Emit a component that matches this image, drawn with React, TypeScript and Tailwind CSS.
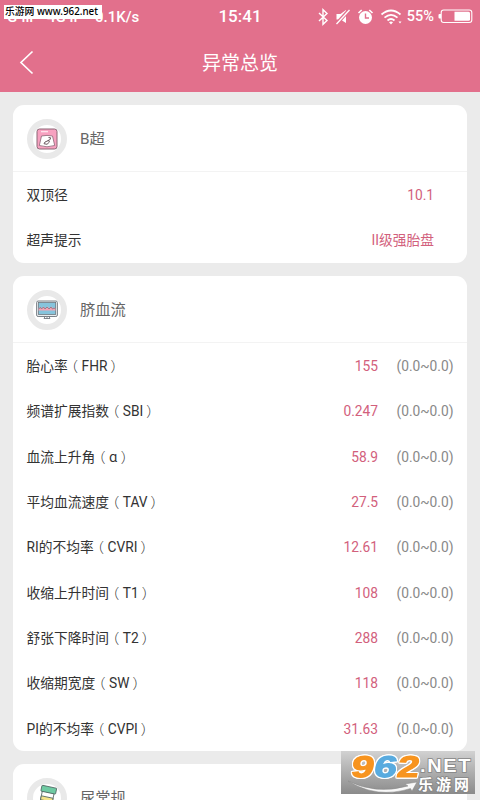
import type { ReactNode } from 'react'

type Row = { label: string; code?: string; value: string; range?: string }

const ULTRASOUND: Row[] = [
  { label: '双顶径', value: '10.1' },
  { label: '超声提示', value: 'II级强胎盘' },
]

const BLOOD_FLOW: Row[] = [
  { label: '胎心率', code: 'FHR', value: '155', range: '(0.0~0.0)' },
  { label: '频谱扩展指数', code: 'SBI', value: '0.247', range: '(0.0~0.0)' },
  { label: '血流上升角', code: 'ɑ', value: '58.9', range: '(0.0~0.0)' },
  { label: '平均血流速度', code: 'TAV', value: '27.5', range: '(0.0~0.0)' },
  { label: 'RI的不均率', code: 'CVRI', value: '12.61', range: '(0.0~0.0)' },
  { label: '收缩上升时间', code: 'T1', value: '108', range: '(0.0~0.0)' },
  { label: '舒张下降时间', code: 'T2', value: '288', range: '(0.0~0.0)' },
  { label: '收缩期宽度', code: 'SW', value: '118', range: '(0.0~0.0)' },
  { label: 'PI的不均率', code: 'CVPI', value: '31.63', range: '(0.0~0.0)' },
]

function ScanIcon() {
  return (
    <svg width="22" height="22" viewBox="0 0 22 22" fill="none">
      <rect x="1" y="1" width="20" height="20" rx="2.500" fill="#f7a1c0" stroke="#8a6675" />
      <path d="M5 3.600h7" stroke="#fde3ec" strokeWidth="1.400" />
      <path d="M5.500 8q5.500-1.200 11 0l2.200 9.500q-7.700 2.600-15.400 0z" fill="#fff" stroke="#8a6675" strokeWidth=".8" />
      <path d="M12.500 9.500l2.200.3-1 2.200-2 .5M12.500 12.500l1 1.500-2.500 2.300-3-.6 1-1.700z" stroke="#5c4850" strokeWidth=".9" />
    </svg>
  )
}

function MonitorIcon() {
  return (
    <svg width="22" height="20" viewBox="0 0 22 20" fill="none">
      <rect x=".6" y="1" width="20.800" height="15.500" rx="1.500" fill="#e9eef0" stroke="#7b8187" />
      <rect x="2.300" y="2.500" width="17.400" height="12" fill="#86c4dc" stroke="#656c73" strokeWidth=".7" />
      <path d="M2.500 8.500l2-1.500 1.500 1.500 1.500-2 2 2 2-2 2 2 2-2 1.500 2 1-1 1.500 1v2h-17z" fill="#f3a3b4" />
      <path d="M2.500 9l2-1.500 1 1.500 2-2 1.500 2 2-2 2 2 2-2 1.500 2 1.500-1 1.500 1" stroke="#6d5f6c" strokeWidth=".6" />
      <path d="M9 16.500l-1 2h6l-1-2M11 17v1.500" stroke="#656c73" strokeWidth=".8" />
    </svg>
  )
}

function BottleIcon() {
  return (
    <svg width="22" height="26" viewBox="0 0 22 26" fill="none">
      <g transform="rotate(12 11 13)" stroke="#4f6460" strokeWidth=".8">
        <path d="M5 7h12v17H5z" fill="#fff" />
        <path d="M5 12h12v4H5z" fill="#f4e389" />
        <rect x="3.500" y="1.500" width="15" height="6" rx=".7" fill="#6fcba3" />
      </g>
    </svg>
  )
}

function StatusIcons() {
  return (
    <svg width="88" height="18" viewBox="0 0 88 18" fill="none" stroke="#fff">
      <path d="M2 5l8 7.500-4 3.800V1.700l4 3.800-8 7.500" strokeWidth="1.400" />
      <path d="M19.500 6h4L29 2v13l-5.500-3.500h-4z" fill="#fff" stroke="none" />
      <path d="M19 16.500L32.500 1.500" stroke="#e2708c" strokeWidth="3.500" />
      <path d="M19.500 16l13-14" strokeWidth="1.300" />
      <g transform="translate(-2 0)">
        <circle cx="50.500" cy="9.500" r="6.500" fill="#fff" stroke="none" />
        <path d="M43.500 5l3.200-3M57.500 5l-3.200-3" strokeWidth="1.600" />
        <path d="M50.500 5.500v4.500h3.500" stroke="#e2708c" strokeWidth="1.400" />
      </g>
      <path d="M64.500 6.500q9.500-8 19 0M67.500 9.700q6.500-5.500 13 0M70.500 12.500q3.500-3 7 0" strokeWidth="1.700" />
      <path d="M72 14.300q2-1.500 4 0l-2 2.200z" fill="#fff" stroke="none" />
      <path d="M81.500 13.500h3l-1.500 2z" fill="#fff" stroke="none" />
    </svg>
  )
}

function BatteryIcon() {
  return (
    <svg width="35" height="15" viewBox="0 0 35 15" fill="none">
      <rect x="3.200" y="1" width="30.600" height="12.500" rx="2.500" stroke="#fff" strokeWidth="1.100" />
      <path d="M16.500 2.700h14q1.500 0 1.500 1.500v6q0 1.500-1.500 1.500h-14z" fill="#fff" />
      <path d="M3 5H1.500Q.5 5 .5 6v2.500q0 1 1 1H3z" fill="#fff" />
    </svg>
  )
}

function Label({ row }: { row: Row }) {
  return (
    <span className="grow">
      {row.label}
      {row.code && (
        <>
          <span className="mr-[3.500px] -ml-[3.500px] font-light">（</span>
          {row.code}
          <span className="ml-[3px] font-light">）</span>
        </>
      )}
    </span>
  )
}

function Card({ title, icon, rows = [] }: { title: string; icon: ReactNode; rows?: Row[] }) {
  return (
    <section className="rounded-[11px] bg-white">
      <div className="flex h-[67px] items-center border-b border-[#f3f3f3] pt-px pl-[13.500px]">
        <span className="flex size-10 shrink-0 items-center justify-center rounded-full border-[6px] border-[#e9e9e9]">
          <span className="flex shrink-0">{icon}</span>
        </span>
        <h2 className="ml-[13.500px] pt-px text-[15.300px] text-[#666]">{title}</h2>
      </div>
      {rows.map((row) => (
        <div key={row.label} className="flex h-[45.300px] items-center pt-[1.500px] pl-[13.500px] text-[13.750px] text-[#333]">
          <Label row={row} />
          <span className={row.range ? 'text-[#d2607c]' : 'pr-[33px] text-[#d2607c]'}>{row.value}</span>
          {row.range && <span className="w-[89px] pr-[13.500px] text-right text-[#888]">{row.range}</span>}
        </div>
      ))}
    </section>
  )
}

function SiteBadge() {
  return (
    <div className="absolute top-[751px] left-[341px] h-[43px] w-[134px] bg-linear-to-b from-[#d2d2d2] to-[#8b8b8b]">
      <svg width="134" height="43" viewBox="0 0 134 43">
        <path d="M7 30q28 14 60 5l-3-2 12-2-5 9-1.500-2.500Q36 48 7 30z" fill="#f8f8f8" stroke="#888" strokeWidth=".5" />
        <g
          className="[filter:drop-shadow(1px_0_0_white)_drop-shadow(-1px_0_0_white)_drop-shadow(0_1px_0_white)_drop-shadow(0_-1px_0_white)]"
          fontFamily="Liberation Sans, sans-serif"
          fontWeight="bold"
          fontSize="30"
          strokeWidth="1.200"
        >
          <text transform="translate(9 25.5) skewX(-10) scale(1.35 1)" fill="#f7941f" stroke="#f7941f">9</text>
          <text transform="translate(32 25.5) skewX(-10) scale(1.35 1)" fill="#59abdf" stroke="#59abdf">6</text>
          <text transform="translate(55 25.5) skewX(-10) scale(1.3 1)" fill="#f7941f" stroke="#f7941f">2</text>
        </g>
        <g fill="#fff" stroke="#858585" strokeWidth="1.600" paintOrder="stroke" fontWeight="bold">
          <text x="79" y="21" fontSize="18" fontFamily="Liberation Sans, sans-serif" textLength="52" lengthAdjust="spacingAndGlyphs" letterSpacing="1.500">
            .NET
          </text>
          <text x="77" y="39" fontSize="15" fontFamily="Noto Sans CJK SC, sans-serif" textLength="51">乐游网</text>
        </g>
      </svg>
    </div>
  )
}

export default function App() {
  return (
    <div className="relative h-[800px] w-[480px] overflow-hidden bg-[#ebebeb] font-[Roboto,'Noto_Sans_CJK_SC',sans-serif]">
      <header className="h-[92px] bg-[#e2708c] text-white">
        <div className="flex h-[33px] items-center justify-between px-[7px] text-[14px] font-medium">
          <span className="flex w-[210px] pt-px text-[15px]">
            <span className="w-[40px]">G·ııı</span>
            <span className="w-[48px]">4G ıı</span>
            <span>0.1K/s</span>
          </span>
          <span className="pt-px text-[17px]">15:41</span>
          <span className="flex w-[210px] items-center justify-end">
            <StatusIcons />
            <span className="mr-1 ml-0.5 pt-px text-[14.500px]">55%</span>
            <BatteryIcon />
          </span>
        </div>
        <div className="relative flex h-[59px] items-center justify-center">
          <svg className="absolute left-[19px]" width="15" height="25" viewBox="0 0 15 25" fill="none">
            <path d="M13.500 1.500L2 12.500l11.500 11" stroke="#fff" strokeWidth="1.700" />
          </svg>
          <h1 className="pt-[3px] text-[19px]">异常总览</h1>
        </div>
      </header>
      <main className="flex flex-col gap-[13.500px] px-[13px] pt-[13px]">
        <Card title="B超" icon={<ScanIcon />} rows={ULTRASOUND} />
        <Card title="脐血流" icon={<MonitorIcon />} rows={BLOOD_FLOW} />
        <Card title="尿常规" icon={<BottleIcon />} />
      </main>
      <div className="absolute top-[5px] left-1 flex h-[14px] w-[98px] items-center bg-white pl-px font-['Noto_Sans','Noto_Sans_CJK_SC',sans-serif] text-[9.800px] font-medium whitespace-nowrap text-black">
        乐游网 www.962.net
      </div>
      <SiteBadge />
    </div>
  )
}
